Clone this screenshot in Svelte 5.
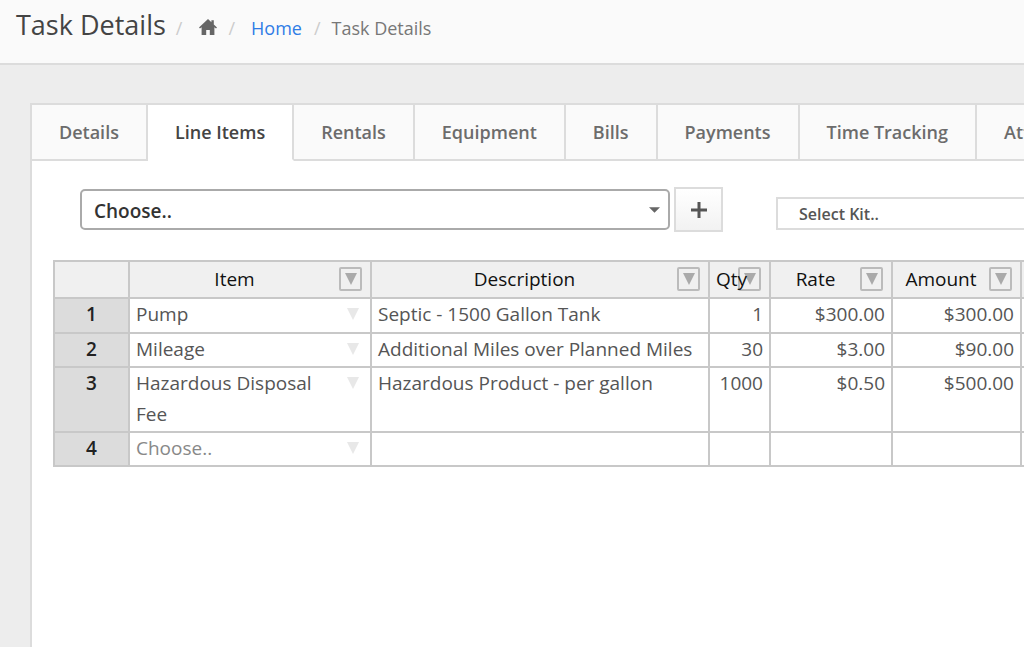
<script lang="ts">
  const tabs = ['Details', 'Line Items', 'Rentals', 'Equipment', 'Bills', 'Payments', 'Time Tracking', 'Attachments'];

  const columns = [
    { key: 'item', label: 'Item' },
    { key: 'description', label: 'Description' },
    { key: 'qty', label: 'Qty' },
    { key: 'rate', label: 'Rate' },
    { key: 'amount', label: 'Amount' },
  ];

  const rows = [
    { item: 'Pump', description: 'Septic - 1500 Gallon Tank', qty: '1', rate: '$300.00', amount: '$300.00' },
    { item: 'Mileage', description: 'Additional Miles over Planned Miles', qty: '30', rate: '$3.00', amount: '$90.00' },
    { item: 'Hazardous Disposal Fee', description: 'Hazardous Product - per gallon', qty: '1000', rate: '$0.50', amount: '$500.00' },
    { item: '', description: '', qty: '', rate: '', amount: '' },
  ];

  let active = $state('Line Items');
</script>

{#snippet triangle()}
  <svg class="triangle" viewBox="0 0 12 12" aria-hidden="true"><path d="M0 0h12L6 12z" /></svg>
{/snippet}

<header class="page-header">
  <h1>Task Details</h1>
  <nav class="crumbs" aria-label="Breadcrumb">
    <span class="sep">/</span>
    <a href="#top" class="house" aria-label="Dashboard">
      <svg viewBox="0 0 18 16" aria-hidden="true">
        <path d="M9 0 0 8.4l1 1.1 1.6-1.3V16h4.6v-5h3.6v5h4.6V8.2L17 9.5l1-1.1-3.2-3V1.2h-2.4v2z" />
      </svg>
    </a>
    <span class="sep">/</span>
    <a href="#home" class="home">Home</a>
    <span class="sep">/</span>
    <span class="current">Task Details</span>
  </nav>
</header>

<main>
  <div class="tabs" role="tablist">
    {#each tabs as tab}
      <button class="tab" class:active={tab === active} role="tab" aria-selected={tab === active} onclick={() => (active = tab)}>{tab}</button>
    {/each}
  </div>

  <section class="panel">
    <div class="toolbar">
      <div class="picker">
        <select class="item-select" aria-label="Item">
          <option>Choose..</option>
        </select>
        <svg class="caret" viewBox="0 0 12 6" aria-hidden="true"><path d="M0 0h12L6 6z" /></svg>
      </div>
      <button class="add" aria-label="Add item">
        <svg viewBox="0 0 16 16" aria-hidden="true"><path d="M8 0v16M0 8h16" /></svg>
      </button>
      <select class="kit-select" aria-label="Kit">
        <option>Select Kit..</option>
      </select>
    </div>

    <table>
      <colgroup>
        <col class="w-num" /><col class="w-item" /><col class="w-desc" /><col class="w-qty" /><col class="w-rate" /><col class="w-amount" /><col class="w-rest" />
      </colgroup>
      <thead>
        <tr>
          <th></th>
          {#each columns as col}
            <th scope="col" class={col.key}>
              <div class="head">
                <span>{col.label}</span>
                <button class="filter" aria-label="Filter {col.label}">{@render triangle()}</button>
              </div>
            </th>
          {/each}
          <th></th>
        </tr>
      </thead>
      <tbody>
        {#each rows as row, i}
          <tr>
            <th scope="row">{i + 1}</th>
            <td>
              <div class="cell">
                <span class:empty={!row.item}>{row.item || 'Choose..'}</span>
                {@render triangle()}
              </div>
            </td>
            <td>{row.description}</td>
            <td class="num">{row.qty}</td>
            <td class="num">{row.rate}</td>
            <td class="num">{row.amount}</td>
            <td></td>
          </tr>
        {/each}
      </tbody>
    </table>
  </section>
</main>

<style>
  :global(body) {
    background: #ededed;
    color: #555;
    font-family: "Open Sans", sans-serif;
    overflow-x: hidden;
  }

  button, select {
    font-family: inherit;
    margin: 0;
  }

  .page-header {
    display: flex;
    align-items: baseline;
    box-sizing: border-box;
    height: 65px;
    padding: 7px 16px 0;
    background: #fafafa;
    border-bottom: 2px solid #dcdcdc;
  }

  h1 {
    margin: 0;
    color: #444;
    font-size: 27px;
    font-weight: 400;
    line-height: 36px;
  }

  .crumbs {
    display: flex;
    align-items: baseline;
    margin-left: 10px;
    font-size: 18px;
    color: #777;
  }

  .sep { color: #ccc; }

  .house {
    margin: 0 11px 0 17px;
  }

  .house svg {
    display: block;
    width: 18px;
    height: 16px;
    fill: #666;
  }

  .home {
    margin: 0 12px 0 16px;
    color: #2f7de6;
    text-decoration: none;
  }

  .current { margin-left: 11px; }

  main {
    padding: 38px 0 0 30px;
    overflow: hidden;
  }

  .tabs {
    display: flex;
    border-top: 2px solid #dcdcdc;
    border-left: 2px solid #dcdcdc;
  }

  .tab {
    flex: none;
    height: 56px;
    padding: 0 27px;
    background: #fafafa;
    border: 0 solid #dcdcdc;
    border-width: 0 2px 2px 0;
    color: #6c6c6c;
    font-size: 18px;
    font-weight: 600;
    cursor: pointer;
  }

  .tab.active {
    background: #fff;
    border-bottom-color: #fff;
    color: #444;
  }

  .panel {
    min-height: calc(100vh - 161px);
    padding: 26px 0 0 21px;
    box-sizing: border-box;
    background: #fff;
    border-left: 2px solid #dcdcdc;
  }

  .toolbar {
    display: flex;
    align-items: flex-end;
    padding-left: 27px;
    margin-bottom: 28px;
  }

  .picker {
    position: relative;
    flex: 0 0 62.5%;
    margin-bottom: 2px;
  }

  .item-select {
    display: block;
    width: 100%;
    height: 41px;
    padding: 2px 12px 0;
    appearance: none;
    background: #fff;
    border: 2px solid #aaa;
    border-radius: 5px;
    color: #333;
    font-size: 19px;
    font-weight: 600;
  }

  .caret {
    position: absolute;
    top: 18px;
    right: 10px;
    width: 11px;
    height: 6px;
    fill: #666;
    pointer-events: none;
  }

  .add {
    flex: none;
    display: grid;
    place-items: center;
    width: 49px;
    height: 45px;
    margin-left: 4px;
    padding: 0;
    background: linear-gradient(#fff, #f2f2f2);
    border: 2px solid #dcdcdc;
  }

  .add svg {
    width: 16px;
    height: 16px;
    stroke: #555;
    stroke-width: 3;
  }

  .kit-select {
    flex: 0 0 400px;
    height: 33px;
    margin: 0 0 2px 53px;
    padding: 0 21px;
    appearance: none;
    background: #fff;
    border: 2px solid #dcdcdc;
    border-radius: 0;
    color: #555;
    font-size: 16px;
    font-weight: 600;
  }

  table {
    table-layout: fixed;
    width: 1200px;
    border-collapse: collapse;
    font-size: 19px;
    line-height: 31px;
  }

  .w-num { width: 75px; }
  .w-item { width: 242px; }
  .w-desc { width: 338px; }
  .w-qty { width: 61px; }
  .w-rate { width: 122px; }
  .w-amount { width: 129px; }

  th, td {
    padding: 0 6px 1px;
    border: 2px solid #c8c8c8;
    vertical-align: top;
    text-align: left;
  }

  thead th {
    height: 34px;
    padding: 0 8px 1px 0;
    background: #f0f0f0;
    color: #111;
    font-weight: 500;
    vertical-align: middle;
  }

  tbody th {
    background: #dcdcdc;
    color: #222;
    font-weight: 600;
    text-align: center;
  }

  tbody tr:first-child { height: 35px; }

  .num { text-align: right; }

  .head {
    display: flex;
    align-items: center;
  }

  .head span {
    flex: 1;
    min-width: 0;
    text-align: center;
  }

  .qty span {
    z-index: 1;
    padding-left: 6px;
    text-align: left;
  }

  .filter {
    flex: none;
    display: grid;
    place-items: center;
    width: 23px;
    height: 24px;
    padding: 0;
    background: #f0f0f0;
    border: 2px solid #bbb;
    border-radius: 2px;
  }

  .triangle {
    flex: none;
    width: 12px;
    height: 12px;
    fill: #e8e8e8;
  }

  .filter .triangle { fill: #aaa; }

  .cell {
    display: flex;
    justify-content: space-between;
    padding-right: 5px;
  }

  .cell .triangle { margin-top: 9px; }

  .empty { color: #888; }
</style>
